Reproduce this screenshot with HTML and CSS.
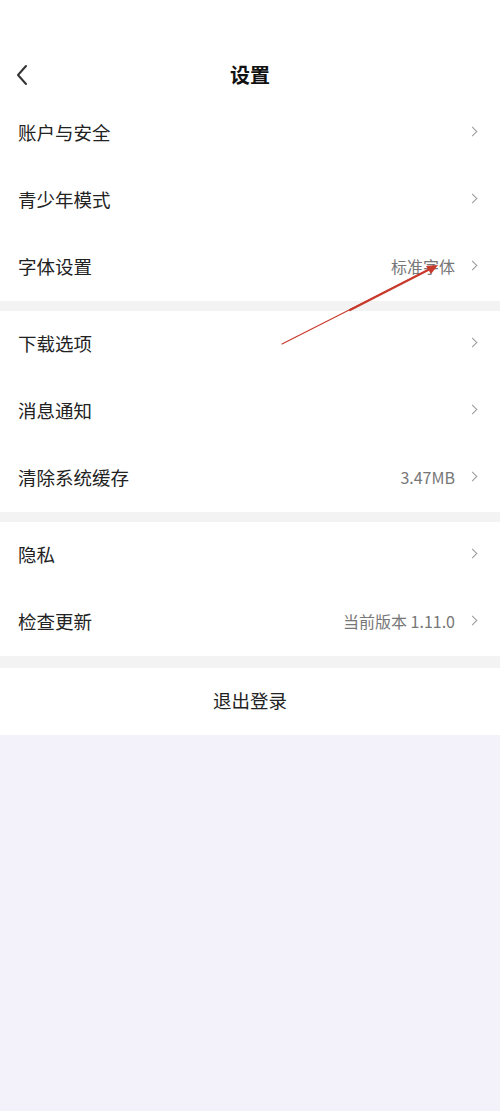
FILE: index.html
```html
<!DOCTYPE html>
<html lang="zh-CN">
<head>
    <meta charset="UTF-8">
    <meta name="viewport" content="width=device-width, initial-scale=1.0">
    <title>设置</title>
    <link rel="stylesheet" href="styles.css">
</head>
<body>
    <div class="page">
        <div class="header">
            <svg class="back" width="14" height="22" viewBox="0 0 14 22">
                <path d="M11 2 L3 11 L11 20" fill="none" stroke="#333" stroke-width="2" stroke-linecap="round" stroke-linejoin="round"/>
            </svg>
            <h1>设置</h1>
        </div>

        <div class="group">
            <div class="row"><span class="label">账户与安全</span><span class="right"><i class="chev"></i></span></div>
            <div class="row"><span class="label">青少年模式</span><span class="right"><i class="chev"></i></span></div>
            <div class="row"><span class="label">字体设置</span><span class="right"><span class="value">标准字体</span><i class="chev"></i></span></div>
        </div>

        <div class="group">
            <div class="row"><span class="label">下载选项</span><span class="right"><i class="chev"></i></span></div>
            <div class="row"><span class="label">消息通知</span><span class="right"><i class="chev"></i></span></div>
            <div class="row"><span class="label">清除系统缓存</span><span class="right"><span class="value">3.47MB</span><i class="chev"></i></span></div>
        </div>

        <div class="group">
            <div class="row"><span class="label">隐私</span><span class="right"><i class="chev"></i></span></div>
            <div class="row"><span class="label">检查更新</span><span class="right"><span class="value">当前版本 1.11.0</span><i class="chev"></i></span></div>
        </div>

        <div class="group last">
            <div class="logout">退出登录</div>
        </div>

        <!-- 红色标注箭头 -->
        <svg class="mark" width="500" height="400" viewBox="0 0 500 400">
            <path d="M282 344 L430 269" stroke="#c83a2c" stroke-width="1.2" stroke-linecap="round"/>
            <path d="M350 310 L430 269" stroke="#c83a2c" stroke-width="2.2" stroke-linecap="round"/>
            <path d="M438 265 L426 266 L431 274 Z" fill="#c83a2c"/>
        </svg>
    </div>
</body>
</html>
```

FILE: styles.css
```css
html, body {
    margin: 0;
    padding: 0;
}
body {
    font-family: "Noto Sans CJK SC", "Noto Sans", sans-serif;
    background-color: #f3f2fa;
    color: #222;
}
.page {
    position: relative;
    width: 500px;
    min-height: 1111px;
}
.header {
    background-color: #fff;
    height: 100px;
    display: flex;
    align-items: center;
    justify-content: center;
    position: relative;
}
.header h1 {
    margin: 50px 0 0 0;
    font-size: 20px;
    font-weight: bold;
    line-height: 50px;
    color: #111;
}
.back {
    position: absolute;
    left: 15px;
    top: 64px;
}
.group {
    background-color: #fff;
    border-bottom: 10px solid #f3f3f3;
}
.group.last {
    border-bottom: none;
}
.group:nth-of-type(4) {
    border-bottom-width: 12px;
}
.row {
    height: 67px;
    display: flex;
    align-items: center;
    justify-content: space-between;
    padding: 0 18px 4px 18px;
    box-sizing: border-box;
}
.label {
    font-size: 18.5px;
    color: #222;
}
.right {
    display: flex;
    align-items: center;
}
.value {
    font-size: 16px;
    color: #777;
    margin-right: 14px;
}
.chev {
    display: inline-block;
    width: 6px;
    height: 6px;
    border-top: 1.5px solid #999;
    border-right: 1.5px solid #999;
    transform: rotate(45deg);
    margin-right: 6px;
}
.logout {
    height: 67px;
    display: flex;
    align-items: center;
    justify-content: center;
    padding-bottom: 4px;
    box-sizing: border-box;
    font-size: 18.5px;
    color: #222;
}
.mark {
    position: absolute;
    left: 0;
    top: 0;
    pointer-events: none;
}
```
